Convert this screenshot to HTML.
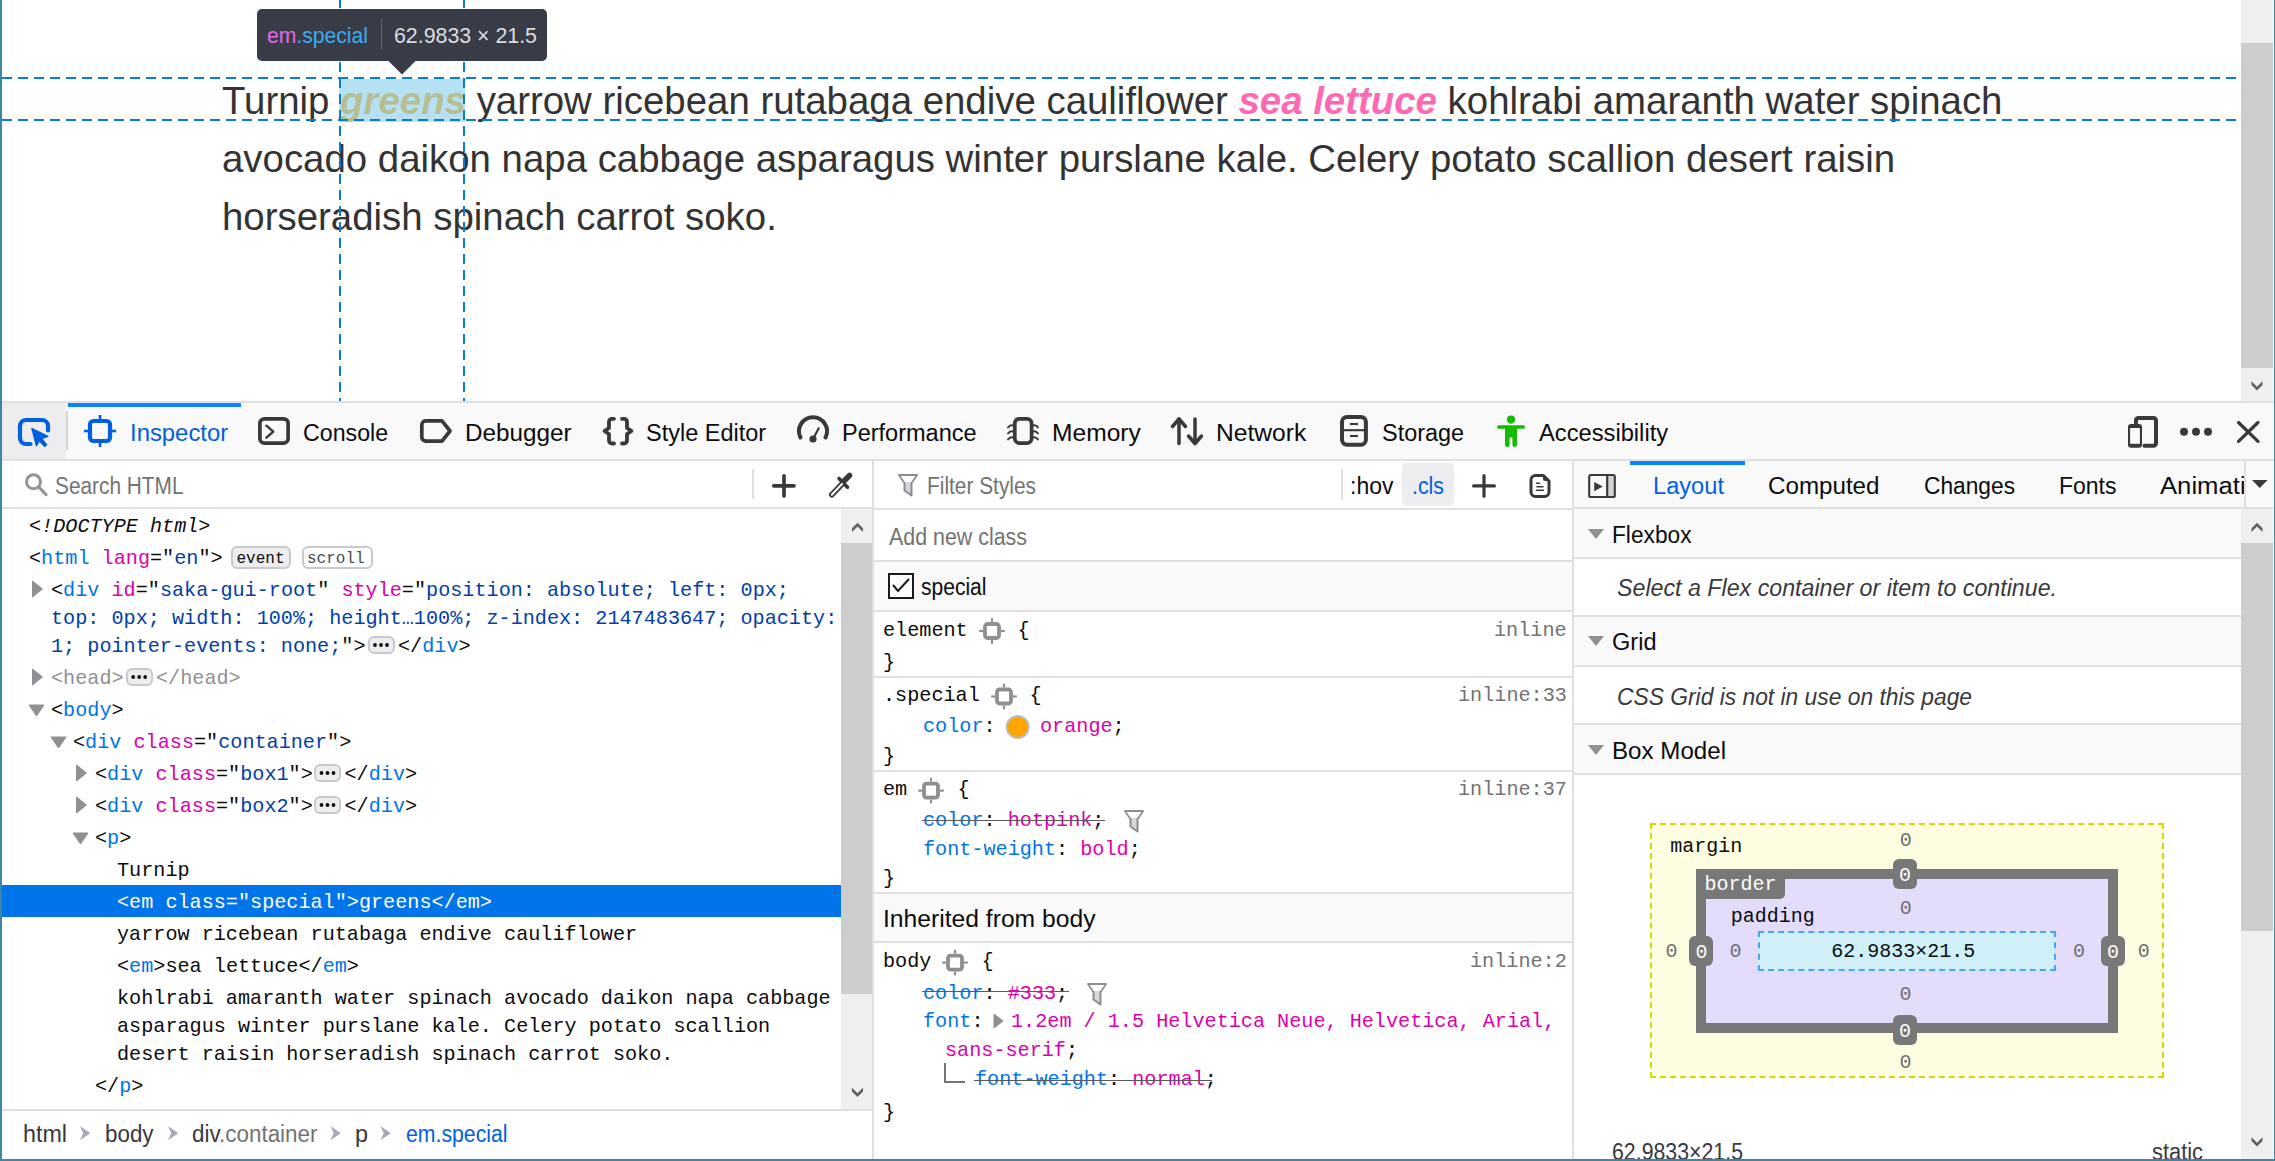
<!DOCTYPE html>
<html><head><meta charset="utf-8"><style>
html,body{margin:0;padding:0;width:2275px;height:1161px;overflow:hidden;background:#fff;}
body{position:relative;font-family:'Liberation Sans', sans-serif;}
</style></head><body>
<div style="position:absolute;left:0px;top:0px;width:2275px;height:401px;background:#ffffff;"></div><div style="position:absolute;left:222px;top:82.36px;font-family:'Liberation Sans', sans-serif;font-size:38.4px;line-height:38.4px;color:#333333;white-space:pre;"><span style="color:#333333;">Turnip </span><span style="color:#ffa500;font-weight:bold;font-style:italic">greens</span><span style="color:#333333;"> yarrow ricebean rutabaga endive cauliflower </span><span style="color:#ff69b4;font-weight:bold;font-style:italic">sea lettuce</span><span style="color:#333333;"> kohlrabi amaranth water spinach</span></div><div style="position:absolute;left:222px;top:139.96px;font-family:'Liberation Sans', sans-serif;font-size:38.4px;line-height:38.4px;color:#333333;white-space:pre;">avocado daikon napa cabbage asparagus winter purslane kale. Celery potato scallion desert raisin</div><div style="position:absolute;left:222px;top:197.56px;font-family:'Liberation Sans', sans-serif;font-size:38.4px;line-height:38.4px;color:#333333;white-space:pre;">horseradish spinach carrot soko.</div><div style="position:absolute;left:339px;top:79px;width:126px;height:43px;background:rgba(137,206,236,0.62);"></div><svg style="position:absolute;left:0;top:0" width="2275" height="401"><line x1="2" y1="78" x2="2241" y2="78" stroke="#0a7bd0" stroke-width="2" stroke-dasharray="10 6"/><line x1="2" y1="120" x2="2241" y2="120" stroke="#0a7bd0" stroke-width="2" stroke-dasharray="10 6"/><line x1="340" y1="-2" x2="340" y2="401" stroke="#0a7bd0" stroke-width="2" stroke-dasharray="10 6"/><line x1="464" y1="-2" x2="464" y2="401" stroke="#0a7bd0" stroke-width="2" stroke-dasharray="10 6"/></svg><svg style="position:absolute;left:0;top:0" width="600" height="90"><rect x="257" y="9" width="290" height="52" rx="5" fill="#383c46"/><polygon points="387.5,60 416.5,60 402,74.5" fill="#383c46"/></svg><div style="position:absolute;left:267px;top:25.30px;font-family:'Liberation Sans', sans-serif;font-size:22px;line-height:22px;color:#0c0c0d;white-space:pre;transform:scaleX(0.9605);transform-origin:0 0;"><span style="color:#e667e8;">em</span><span style="color:#3eaaf0;">.special</span></div><div style="position:absolute;left:380.5px;top:19px;width:1.5px;height:30px;background:#5d626b;"></div><div style="position:absolute;left:394px;top:25.30px;font-family:'Liberation Sans', sans-serif;font-size:22px;line-height:22px;color:#dcdce0;white-space:pre;transform:scaleX(0.9700);transform-origin:0 0;">62.9833 × 21.5</div><div style="position:absolute;left:2241px;top:0px;width:32px;height:401px;background:#efefef;"></div><div style="position:absolute;left:2241px;top:43px;width:32px;height:325px;background:#cdcdcd;"></div><div style="position:absolute;left:0px;top:401px;width:2275px;height:60px;background:#f9f9fa;"></div><div style="position:absolute;left:0px;top:401px;width:2275px;height:2px;background:#e0e0e2;"></div><div style="position:absolute;left:0px;top:459px;width:2275px;height:2px;background:#e0e0e2;"></div><div style="position:absolute;left:2px;top:403px;width:64px;height:56px;background:#ededf0;"></div><div style="position:absolute;left:66px;top:411px;width:2px;height:39px;background:#d7d7db;"></div><div style="position:absolute;left:68px;top:403px;width:173px;height:4px;background:#0a84ff;"></div><div style="position:absolute;left:129.8px;top:422.02px;font-family:'Liberation Sans', sans-serif;font-size:23.5px;line-height:23.5px;color:#0060df;white-space:pre;transform:scaleX(1.0158);transform-origin:0 0;">Inspector</div><div style="position:absolute;left:303.4px;top:422.02px;font-family:'Liberation Sans', sans-serif;font-size:23.5px;line-height:23.5px;color:#0c0c0d;white-space:pre;transform:scaleX(0.9868);transform-origin:0 0;">Console</div><div style="position:absolute;left:464.9px;top:422.02px;font-family:'Liberation Sans', sans-serif;font-size:23.5px;line-height:23.5px;color:#0c0c0d;white-space:pre;transform:scaleX(1.0328);transform-origin:0 0;">Debugger</div><div style="position:absolute;left:646.4px;top:422.02px;font-family:'Liberation Sans', sans-serif;font-size:23.5px;line-height:23.5px;color:#0c0c0d;white-space:pre;transform:scaleX(0.9994);transform-origin:0 0;">Style Editor</div><div style="position:absolute;left:841.5px;top:422.02px;font-family:'Liberation Sans', sans-serif;font-size:23.5px;line-height:23.5px;color:#0c0c0d;white-space:pre;transform:scaleX(1.0005);transform-origin:0 0;">Performance</div><div style="position:absolute;left:1051.7px;top:422.02px;font-family:'Liberation Sans', sans-serif;font-size:23.5px;line-height:23.5px;color:#0c0c0d;white-space:pre;transform:scaleX(1.0462);transform-origin:0 0;">Memory</div><div style="position:absolute;left:1216px;top:422.02px;font-family:'Liberation Sans', sans-serif;font-size:23.5px;line-height:23.5px;color:#0c0c0d;white-space:pre;transform:scaleX(1.0477);transform-origin:0 0;">Network</div><div style="position:absolute;left:1382px;top:422.02px;font-family:'Liberation Sans', sans-serif;font-size:23.5px;line-height:23.5px;color:#0c0c0d;white-space:pre;transform:scaleX(0.9974);transform-origin:0 0;">Storage</div><div style="position:absolute;left:1539px;top:422.02px;font-family:'Liberation Sans', sans-serif;font-size:23.5px;line-height:23.5px;color:#0c0c0d;white-space:pre;transform:scaleX(1.0087);transform-origin:0 0;">Accessibility</div><div style="position:absolute;left:2px;top:461px;width:2271px;height:698px;background:#ffffff;"></div><div style="position:absolute;left:2px;top:507px;width:870px;height:2px;background:#e0e0e2;"></div><div style="position:absolute;left:54.7px;top:474.75px;font-family:'Liberation Sans', sans-serif;font-size:23px;line-height:23px;color:#737373;white-space:pre;transform:scaleX(0.9057);transform-origin:0 0;">Search HTML</div><div style="position:absolute;left:752px;top:469px;width:2px;height:30px;background:#e0e0e2;"></div><div style="position:absolute;left:872px;top:461px;width:2px;height:698px;background:#e0e0e2;"></div><div style="position:absolute;left:1572px;top:461px;width:2px;height:698px;background:#e0e0e2;"></div><div style="position:absolute;left:2px;top:1109px;width:870px;height:2px;background:#e0e0e2;"></div><div style="position:absolute;left:22.6px;top:1123.45px;font-family:'Liberation Sans', sans-serif;font-size:23px;line-height:23px;color:#38383d;white-space:pre;transform:scaleX(1.0126);transform-origin:0 0;">html</div><div style="position:absolute;left:105.4px;top:1123.45px;font-family:'Liberation Sans', sans-serif;font-size:23px;line-height:23px;color:#38383d;white-space:pre;transform:scaleX(0.9724);transform-origin:0 0;">body</div><div style="position:absolute;left:192px;top:1123.45px;font-family:'Liberation Sans', sans-serif;font-size:23px;line-height:23px;color:#0c0c0d;white-space:pre;transform:scaleX(0.9750);transform-origin:0 0;"><span style="color:#38383d;">div</span><span style="color:#737373;">.container</span></div><div style="position:absolute;left:354.5px;top:1123.45px;font-family:'Liberation Sans', sans-serif;font-size:23px;line-height:23px;color:#38383d;white-space:pre;transform:scaleX(1.0159);transform-origin:0 0;">p</div><div style="position:absolute;left:405.7px;top:1123.45px;font-family:'Liberation Sans', sans-serif;font-size:23px;line-height:23px;color:#0060df;white-space:pre;transform:scaleX(0.9233);transform-origin:0 0;">em.special</div><div style="position:absolute;left:841px;top:509px;width:31px;height:600px;background:#efefef;"></div><div style="position:absolute;left:841px;top:543px;width:31px;height:451px;background:#cdcdcd;"></div><div style="position:absolute;left:2px;top:885px;width:839px;height:32px;background:#0074e8;"></div><div style="position:absolute;left:29px;top:516.68px;font-family:'Liberation Mono', monospace;font-size:20.16px;line-height:20.16px;color:#0c0c0d;white-space:pre;"><span style="color:#0c0c0d;font-style:italic">&lt;!DOCTYPE html&gt;</span></div><div style="position:absolute;left:29px;top:548.68px;font-family:'Liberation Mono', monospace;font-size:20.16px;line-height:20.16px;color:#0c0c0d;white-space:pre;"><span style="color:#0c0c0d;">&lt;</span><span style="color:#0074e8;">html</span><span style="color:#0c0c0d;"> </span><span style="color:#dd00a9;">lang</span><span style="color:#0c0c0d;">=&quot;</span><span style="color:#003eaa;">en</span><span style="color:#0c0c0d;">&quot;&gt;</span></div><div style="position:absolute;left:51px;top:580.68px;font-family:'Liberation Mono', monospace;font-size:20.16px;line-height:20.16px;color:#0c0c0d;white-space:pre;"><span style="color:#0c0c0d;">&lt;</span><span style="color:#0074e8;">div</span><span style="color:#0c0c0d;"> </span><span style="color:#dd00a9;">id</span><span style="color:#0c0c0d;">=&quot;</span><span style="color:#003eaa;">saka-gui-root</span><span style="color:#0c0c0d;">&quot; </span><span style="color:#dd00a9;">style</span><span style="color:#0c0c0d;">=&quot;</span><span style="color:#003eaa;">position: absolute; left: 0px;</span></div><div style="position:absolute;left:51px;top:608.68px;font-family:'Liberation Mono', monospace;font-size:20.16px;line-height:20.16px;color:#0c0c0d;white-space:pre;"><span style="color:#003eaa;">top: 0px; width: 100%; height…100%; z-index: 2147483647; opacity:</span></div><div style="position:absolute;left:51px;top:636.68px;font-family:'Liberation Mono', monospace;font-size:20.16px;line-height:20.16px;color:#0c0c0d;white-space:pre;"><span style="color:#003eaa;">1; pointer-events: none;</span><span style="color:#0c0c0d;">&quot;&gt;</span></div><div style="position:absolute;left:398px;top:636.68px;font-family:'Liberation Mono', monospace;font-size:20.16px;line-height:20.16px;color:#0c0c0d;white-space:pre;"><span style="color:#0c0c0d;">&lt;/</span><span style="color:#0074e8;">div</span><span style="color:#0c0c0d;">&gt;</span></div><div style="position:absolute;left:51px;top:668.68px;font-family:'Liberation Mono', monospace;font-size:20.16px;line-height:20.16px;color:#0c0c0d;white-space:pre;"><span style="color:#8f8f94;">&lt;head&gt;</span></div><div style="position:absolute;left:156px;top:668.68px;font-family:'Liberation Mono', monospace;font-size:20.16px;line-height:20.16px;color:#0c0c0d;white-space:pre;"><span style="color:#8f8f94;">&lt;/head&gt;</span></div><div style="position:absolute;left:51px;top:700.68px;font-family:'Liberation Mono', monospace;font-size:20.16px;line-height:20.16px;color:#0c0c0d;white-space:pre;"><span style="color:#0c0c0d;">&lt;</span><span style="color:#0074e8;">body</span><span style="color:#0c0c0d;">&gt;</span></div><div style="position:absolute;left:73px;top:732.68px;font-family:'Liberation Mono', monospace;font-size:20.16px;line-height:20.16px;color:#0c0c0d;white-space:pre;"><span style="color:#0c0c0d;">&lt;</span><span style="color:#0074e8;">div</span><span style="color:#0c0c0d;"> </span><span style="color:#dd00a9;">class</span><span style="color:#0c0c0d;">=&quot;</span><span style="color:#003eaa;">container</span><span style="color:#0c0c0d;">&quot;&gt;</span></div><div style="position:absolute;left:95px;top:764.68px;font-family:'Liberation Mono', monospace;font-size:20.16px;line-height:20.16px;color:#0c0c0d;white-space:pre;"><span style="color:#0c0c0d;">&lt;</span><span style="color:#0074e8;">div</span><span style="color:#0c0c0d;"> </span><span style="color:#dd00a9;">class</span><span style="color:#0c0c0d;">=&quot;</span><span style="color:#003eaa;">box1</span><span style="color:#0c0c0d;">&quot;&gt;</span></div><div style="position:absolute;left:344.5px;top:764.68px;font-family:'Liberation Mono', monospace;font-size:20.16px;line-height:20.16px;color:#0c0c0d;white-space:pre;"><span style="color:#0c0c0d;">&lt;/</span><span style="color:#0074e8;">div</span><span style="color:#0c0c0d;">&gt;</span></div><div style="position:absolute;left:95px;top:796.68px;font-family:'Liberation Mono', monospace;font-size:20.16px;line-height:20.16px;color:#0c0c0d;white-space:pre;"><span style="color:#0c0c0d;">&lt;</span><span style="color:#0074e8;">div</span><span style="color:#0c0c0d;"> </span><span style="color:#dd00a9;">class</span><span style="color:#0c0c0d;">=&quot;</span><span style="color:#003eaa;">box2</span><span style="color:#0c0c0d;">&quot;&gt;</span></div><div style="position:absolute;left:344.5px;top:796.68px;font-family:'Liberation Mono', monospace;font-size:20.16px;line-height:20.16px;color:#0c0c0d;white-space:pre;"><span style="color:#0c0c0d;">&lt;/</span><span style="color:#0074e8;">div</span><span style="color:#0c0c0d;">&gt;</span></div><div style="position:absolute;left:95px;top:828.68px;font-family:'Liberation Mono', monospace;font-size:20.16px;line-height:20.16px;color:#0c0c0d;white-space:pre;"><span style="color:#0c0c0d;">&lt;</span><span style="color:#0074e8;">p</span><span style="color:#0c0c0d;">&gt;</span></div><div style="position:absolute;left:117px;top:860.68px;font-family:'Liberation Mono', monospace;font-size:20.16px;line-height:20.16px;color:#0c0c0d;white-space:pre;"><span style="color:#0c0c0d;">Turnip</span></div><div style="position:absolute;left:117px;top:892.68px;font-family:'Liberation Mono', monospace;font-size:20.16px;line-height:20.16px;color:#0c0c0d;white-space:pre;"><span style="color:#ffffff;">&lt;em class=&quot;special&quot;&gt;greens&lt;/em&gt;</span></div><div style="position:absolute;left:117px;top:924.68px;font-family:'Liberation Mono', monospace;font-size:20.16px;line-height:20.16px;color:#0c0c0d;white-space:pre;"><span style="color:#0c0c0d;">yarrow ricebean rutabaga endive cauliflower</span></div><div style="position:absolute;left:117px;top:956.68px;font-family:'Liberation Mono', monospace;font-size:20.16px;line-height:20.16px;color:#0c0c0d;white-space:pre;"><span style="color:#0c0c0d;">&lt;</span><span style="color:#0074e8;">em</span><span style="color:#0c0c0d;">&gt;sea lettuce&lt;/</span><span style="color:#0074e8;">em</span><span style="color:#0c0c0d;">&gt;</span></div><div style="position:absolute;left:117px;top:988.68px;font-family:'Liberation Mono', monospace;font-size:20.16px;line-height:20.16px;color:#0c0c0d;white-space:pre;"><span style="color:#0c0c0d;">kohlrabi amaranth water spinach avocado daikon napa cabbage</span></div><div style="position:absolute;left:117px;top:1016.68px;font-family:'Liberation Mono', monospace;font-size:20.16px;line-height:20.16px;color:#0c0c0d;white-space:pre;"><span style="color:#0c0c0d;">asparagus winter purslane kale. Celery potato scallion</span></div><div style="position:absolute;left:117px;top:1044.68px;font-family:'Liberation Mono', monospace;font-size:20.16px;line-height:20.16px;color:#0c0c0d;white-space:pre;"><span style="color:#0c0c0d;">desert raisin horseradish spinach carrot soko.</span></div><div style="position:absolute;left:95px;top:1076.68px;font-family:'Liberation Mono', monospace;font-size:20.16px;line-height:20.16px;color:#0c0c0d;white-space:pre;"><span style="color:#0c0c0d;">&lt;/</span><span style="color:#0074e8;">p</span><span style="color:#0c0c0d;">&gt;</span></div><div style="position:absolute;left:230.5px;top:545.5px;width:56.0px;height:19.0px;background:#ededf0;border:2px solid #c8c8ce;border-radius:6px"></div><div style="position:absolute;left:236.5px;top:550.84px;font-family:'Liberation Mono', monospace;font-size:16px;line-height:16px;color:#0c0c0d;white-space:pre;">event</div><div style="position:absolute;left:301.5px;top:545.5px;width:67.0px;height:19.0px;background:#ffffff;border:2px solid #c8c8ce;border-radius:6px"></div><div style="position:absolute;left:307px;top:550.84px;font-family:'Liberation Mono', monospace;font-size:16px;line-height:16px;color:#4a4a4f;white-space:pre;">scroll</div><div style="position:absolute;left:367.5px;top:636px;width:23.0px;height:14px;background:#ededf0;border:2px solid #c8c8ce;border-radius:6px"></div><div style="position:absolute;left:125.7px;top:668px;width:22.999999999999986px;height:14px;background:#ededf0;border:2px solid #c8c8ce;border-radius:6px"></div><div style="position:absolute;left:314px;top:764px;width:23px;height:14px;background:#ededf0;border:2px solid #c8c8ce;border-radius:6px"></div><div style="position:absolute;left:314px;top:796px;width:23px;height:14px;background:#ededf0;border:2px solid #c8c8ce;border-radius:6px"></div><div style="position:absolute;left:874px;top:508px;width:698px;height:2px;background:#e0e0e2;"></div><div style="position:absolute;left:927px;top:474.75px;font-family:'Liberation Sans', sans-serif;font-size:23px;line-height:23px;color:#737373;white-space:pre;transform:scaleX(0.9073);transform-origin:0 0;">Filter Styles</div><div style="position:absolute;left:1341px;top:469px;width:2px;height:31px;background:#e0e0e2;"></div><div style="position:absolute;left:1350px;top:474.75px;font-family:'Liberation Sans', sans-serif;font-size:23px;line-height:23px;color:#0c0c0d;white-space:pre;transform:scaleX(1.0004);transform-origin:0 0;">:hov</div><div style="position:absolute;left:1402px;top:463px;width:52px;height:43px;background:#ededf0;border-radius:4px"></div><div style="position:absolute;left:1412px;top:474.75px;font-family:'Liberation Sans', sans-serif;font-size:23px;line-height:23px;color:#0060df;white-space:pre;transform:scaleX(0.9275);transform-origin:0 0;">.cls</div><div style="position:absolute;left:888.5px;top:525.85px;font-family:'Liberation Sans', sans-serif;font-size:23px;line-height:23px;color:#737373;white-space:pre;transform:scaleX(0.9305);transform-origin:0 0;">Add new class</div><div style="position:absolute;left:874px;top:560px;width:698px;height:2px;background:#e0e0e2;"></div><div style="position:absolute;left:874px;top:562px;width:698px;height:48px;background:#f9f9fa;"></div><div style="position:absolute;left:874px;top:610px;width:698px;height:2px;background:#e0e0e2;"></div><div style="position:absolute;left:888px;top:573px;width:22px;height:22px;border:2px solid #1b1b1b;background:#fff"></div><div style="position:absolute;left:920.8px;top:575.95px;font-family:'Liberation Sans', sans-serif;font-size:23px;line-height:23px;color:#0c0c0d;white-space:pre;transform:scaleX(0.9147);transform-origin:0 0;">special</div><div style="position:absolute;left:874px;top:676px;width:698px;height:2px;background:#e0e0e2;"></div><div style="position:absolute;left:874px;top:770px;width:698px;height:2px;background:#e0e0e2;"></div><div style="position:absolute;left:874px;top:892px;width:698px;height:2px;background:#e0e0e2;"></div><div style="position:absolute;left:874px;top:894px;width:698px;height:47px;background:#f9f9fa;"></div><div style="position:absolute;left:874px;top:941px;width:698px;height:2px;background:#e0e0e2;"></div><div style="position:absolute;left:883px;top:620.68px;font-family:'Liberation Mono', monospace;font-size:20.16px;line-height:20.16px;color:#0c0c0d;white-space:pre;"><span style="color:#0c0c0d;">element</span></div><div style="position:absolute;left:1017.5px;top:620.68px;font-family:'Liberation Mono', monospace;font-size:20.16px;line-height:20.16px;color:#0c0c0d;white-space:pre;"><span style="color:#0c0c0d;">{</span></div><div style="position:absolute;left:1494px;top:620.68px;font-family:'Liberation Mono', monospace;font-size:20.16px;line-height:20.16px;color:#0c0c0d;white-space:pre;"><span style="color:#737373;">inline</span></div><div style="position:absolute;left:883px;top:652.68px;font-family:'Liberation Mono', monospace;font-size:20.16px;line-height:20.16px;color:#0c0c0d;white-space:pre;"><span style="color:#0c0c0d;">}</span></div><div style="position:absolute;left:883px;top:686.18px;font-family:'Liberation Mono', monospace;font-size:20.16px;line-height:20.16px;color:#0c0c0d;white-space:pre;"><span style="color:#0c0c0d;">.special</span></div><div style="position:absolute;left:1029.5px;top:686.18px;font-family:'Liberation Mono', monospace;font-size:20.16px;line-height:20.16px;color:#0c0c0d;white-space:pre;"><span style="color:#0c0c0d;">{</span></div><div style="position:absolute;left:1458px;top:686.18px;font-family:'Liberation Mono', monospace;font-size:20.16px;line-height:20.16px;color:#0c0c0d;white-space:pre;"><span style="color:#737373;">inline:33</span></div><div style="position:absolute;left:923px;top:717.18px;font-family:'Liberation Mono', monospace;font-size:20.16px;line-height:20.16px;color:#0c0c0d;white-space:pre;"><span style="color:#0074e8;">color</span><span style="color:#0c0c0d;">: </span></div><div style="position:absolute;left:1040px;top:717.18px;font-family:'Liberation Mono', monospace;font-size:20.16px;line-height:20.16px;color:#0c0c0d;white-space:pre;"><span style="color:#dd00a9;">orange</span><span style="color:#0c0c0d;">;</span></div><div style="position:absolute;left:883px;top:746.68px;font-family:'Liberation Mono', monospace;font-size:20.16px;line-height:20.16px;color:#0c0c0d;white-space:pre;"><span style="color:#0c0c0d;">}</span></div><div style="position:absolute;left:883px;top:780.28px;font-family:'Liberation Mono', monospace;font-size:20.16px;line-height:20.16px;color:#0c0c0d;white-space:pre;"><span style="color:#0c0c0d;">em</span></div><div style="position:absolute;left:957.5px;top:780.28px;font-family:'Liberation Mono', monospace;font-size:20.16px;line-height:20.16px;color:#0c0c0d;white-space:pre;"><span style="color:#0c0c0d;">{</span></div><div style="position:absolute;left:1458px;top:780.28px;font-family:'Liberation Mono', monospace;font-size:20.16px;line-height:20.16px;color:#0c0c0d;white-space:pre;"><span style="color:#737373;">inline:37</span></div><div style="position:absolute;left:923px;top:811.28px;font-family:'Liberation Mono', monospace;font-size:20.16px;line-height:20.16px;color:#0c0c0d;white-space:pre;"><span style="color:#0074e8;">color</span><span style="color:#0c0c0d;">: </span><span style="color:#dd00a9;">hotpink</span><span style="color:#0c0c0d;">;</span></div><div style="position:absolute;left:922px;top:820px;width:183px;height:1.2000000000000455px;background:#5a5a5a;"></div><div style="position:absolute;left:923px;top:839.98px;font-family:'Liberation Mono', monospace;font-size:20.16px;line-height:20.16px;color:#0c0c0d;white-space:pre;"><span style="color:#0074e8;">font-weight</span><span style="color:#0c0c0d;">: </span><span style="color:#dd00a9;">bold</span><span style="color:#0c0c0d;">;</span></div><div style="position:absolute;left:883px;top:869.38px;font-family:'Liberation Mono', monospace;font-size:20.16px;line-height:20.16px;color:#0c0c0d;white-space:pre;"><span style="color:#0c0c0d;">}</span></div><div style="position:absolute;left:883px;top:908.02px;font-family:'Liberation Sans', sans-serif;font-size:23.5px;line-height:23.5px;color:#0c0c0d;white-space:pre;transform:scaleX(1.0495);transform-origin:0 0;">Inherited from body</div><div style="position:absolute;left:883px;top:952.28px;font-family:'Liberation Mono', monospace;font-size:20.16px;line-height:20.16px;color:#0c0c0d;white-space:pre;"><span style="color:#0c0c0d;">body</span></div><div style="position:absolute;left:981.5px;top:952.28px;font-family:'Liberation Mono', monospace;font-size:20.16px;line-height:20.16px;color:#0c0c0d;white-space:pre;"><span style="color:#0c0c0d;">{</span></div><div style="position:absolute;left:1470px;top:952.28px;font-family:'Liberation Mono', monospace;font-size:20.16px;line-height:20.16px;color:#0c0c0d;white-space:pre;"><span style="color:#737373;">inline:2</span></div><div style="position:absolute;left:923px;top:983.68px;font-family:'Liberation Mono', monospace;font-size:20.16px;line-height:20.16px;color:#0c0c0d;white-space:pre;"><span style="color:#0074e8;">color</span><span style="color:#0c0c0d;">: </span><span style="color:#dd00a9;">#333</span><span style="color:#0c0c0d;">;</span></div><div style="position:absolute;left:922px;top:991.3px;width:147px;height:1.2000000000000455px;background:#5a5a5a;"></div><div style="position:absolute;left:923px;top:1012.28px;font-family:'Liberation Mono', monospace;font-size:20.16px;line-height:20.16px;color:#0c0c0d;white-space:pre;"><span style="color:#0074e8;">font</span><span style="color:#0c0c0d;">:</span></div><div style="position:absolute;left:1011px;top:1012.28px;font-family:'Liberation Mono', monospace;font-size:20.16px;line-height:20.16px;color:#0c0c0d;white-space:pre;"><span style="color:#dd00a9;">1.2em / 1.5 Helvetica Neue, Helvetica, Arial,</span></div><div style="position:absolute;left:945px;top:1040.68px;font-family:'Liberation Mono', monospace;font-size:20.16px;line-height:20.16px;color:#0c0c0d;white-space:pre;"><span style="color:#dd00a9;">sans-serif</span><span style="color:#0c0c0d;">;</span></div><div style="position:absolute;left:975px;top:1070.28px;font-family:'Liberation Mono', monospace;font-size:20.16px;line-height:20.16px;color:#0c0c0d;white-space:pre;"><span style="color:#0074e8;">font-weight</span><span style="color:#0c0c0d;">: </span><span style="color:#dd00a9;">normal</span><span style="color:#0c0c0d;">;</span></div><div style="position:absolute;left:974px;top:1080px;width:238px;height:1.2000000000000455px;background:#5a5a5a;"></div><div style="position:absolute;left:883px;top:1102.68px;font-family:'Liberation Mono', monospace;font-size:20.16px;line-height:20.16px;color:#0c0c0d;white-space:pre;"><span style="color:#0c0c0d;">}</span></div><div style="position:absolute;left:1574px;top:461px;width:699px;height:46px;background:#f9f9fa;"></div><div style="position:absolute;left:1574px;top:507px;width:699px;height:2px;background:#e0e0e2;"></div><div style="position:absolute;left:1630px;top:461px;width:115px;height:4px;background:#0a84ff;"></div><div style="position:absolute;left:1653px;top:475.02px;font-family:'Liberation Sans', sans-serif;font-size:23.5px;line-height:23.5px;color:#0060df;white-space:pre;transform:scaleX(1.0062);transform-origin:0 0;">Layout</div><div style="position:absolute;left:1768px;top:475.02px;font-family:'Liberation Sans', sans-serif;font-size:23.5px;line-height:23.5px;color:#0c0c0d;white-space:pre;transform:scaleX(1.0282);transform-origin:0 0;">Computed</div><div style="position:absolute;left:1924px;top:475.02px;font-family:'Liberation Sans', sans-serif;font-size:23.5px;line-height:23.5px;color:#0c0c0d;white-space:pre;transform:scaleX(0.9673);transform-origin:0 0;">Changes</div><div style="position:absolute;left:2059px;top:475.02px;font-family:'Liberation Sans', sans-serif;font-size:23.5px;line-height:23.5px;color:#0c0c0d;white-space:pre;transform:scaleX(0.9782);transform-origin:0 0;">Fonts</div><div style="position:absolute;left:2160px;top:461px;width:84px;height:46px;overflow:hidden"><div style="position:absolute;left:0px;top:14.03px;font-family:'Liberation Sans', sans-serif;font-size:23.5px;line-height:23.5px;color:#0c0c0d;white-space:pre;transform:scaleX(1.0925);transform-origin:0 0;">Animations</div></div><div style="position:absolute;left:2244px;top:461px;width:2px;height:46px;background:#e0e0e2;"></div><div style="position:absolute;left:2241px;top:509px;width:32px;height:650px;background:#efefef;"></div><div style="position:absolute;left:2241px;top:543px;width:32px;height:388px;background:#cdcdcd;"></div><div style="position:absolute;left:1574px;top:509px;width:667px;height:48px;background:#f9f9fa;"></div><div style="position:absolute;left:1574px;top:557px;width:667px;height:2px;background:#e0e0e2;"></div><div style="position:absolute;left:1611.5px;top:524.02px;font-family:'Liberation Sans', sans-serif;font-size:23.5px;line-height:23.5px;color:#0c0c0d;white-space:pre;transform:scaleX(0.9660);transform-origin:0 0;">Flexbox</div><div style="position:absolute;left:1574px;top:617px;width:667px;height:48px;background:#f9f9fa;"></div><div style="position:absolute;left:1574px;top:665px;width:667px;height:2px;background:#e0e0e2;"></div><div style="position:absolute;left:1611.5px;top:631.02px;font-family:'Liberation Sans', sans-serif;font-size:23.5px;line-height:23.5px;color:#0c0c0d;white-space:pre;transform:scaleX(1.0021);transform-origin:0 0;">Grid</div><div style="position:absolute;left:1574px;top:725px;width:667px;height:48px;background:#f9f9fa;"></div><div style="position:absolute;left:1574px;top:773px;width:667px;height:2px;background:#e0e0e2;"></div><div style="position:absolute;left:1611.5px;top:740.02px;font-family:'Liberation Sans', sans-serif;font-size:23.5px;line-height:23.5px;color:#0c0c0d;white-space:pre;transform:scaleX(1.0267);transform-origin:0 0;">Box Model</div><div style="position:absolute;left:1574px;top:615px;width:667px;height:2px;background:#e0e0e2;"></div><div style="position:absolute;left:1574px;top:723px;width:667px;height:2px;background:#e0e0e2;"></div><div style="position:absolute;left:1616.5px;top:577.45px;font-family:'Liberation Sans', sans-serif;font-size:23px;line-height:23px;color:#38383d;white-space:pre;transform:scaleX(1.0093);transform-origin:0 0;font-style:italic">Select a Flex container or item to continue.</div><div style="position:absolute;left:1616.5px;top:685.95px;font-family:'Liberation Sans', sans-serif;font-size:23px;line-height:23px;color:#38383d;white-space:pre;transform:scaleX(0.9917);transform-origin:0 0;font-style:italic">CSS Grid is not in use on this page</div><div style="position:absolute;left:1650px;top:823px;width:510px;height:251px;background:#fdfde2;border:2px dashed #d6d600"></div><div style="position:absolute;left:1696px;top:869px;width:422px;height:164px;background:#787878;"></div><div style="position:absolute;left:1706px;top:879px;width:402px;height:144px;background:#e3dcfb;"></div><div style="position:absolute;left:1696px;top:869px;width:89px;height:30px;background:#787878;border-bottom-right-radius:5px"></div><div style="position:absolute;left:1758px;top:931px;width:294px;height:36px;background:#cfeff9;border:2px dashed #4aa3f5"></div><div style="position:absolute;left:1670.3px;top:837.30px;font-family:'Liberation Mono', monospace;font-size:20px;line-height:20px;color:#0c0c0d;white-space:pre;">margin</div><div style="position:absolute;left:1704.5px;top:874.80px;font-family:'Liberation Mono', monospace;font-size:20px;line-height:20px;color:#ffffff;white-space:pre;">border</div><div style="position:absolute;left:1730.8px;top:906.60px;font-family:'Liberation Mono', monospace;font-size:20px;line-height:20px;color:#0c0c0d;white-space:pre;">padding</div><div style="position:absolute;left:1831.2px;top:941.60px;font-family:'Liberation Mono', monospace;font-size:20px;line-height:20px;color:#0c0c0d;white-space:pre;">62.9833×21.5</div><div style="position:absolute;left:1899.8px;top:830.80px;font-family:'Liberation Mono', monospace;font-size:20px;line-height:20px;color:#6e6e6e;white-space:pre;">0</div><div style="position:absolute;left:1899.8px;top:898.60px;font-family:'Liberation Mono', monospace;font-size:20px;line-height:20px;color:#6e6e6e;white-space:pre;">0</div><div style="position:absolute;left:1899.6px;top:984.60px;font-family:'Liberation Mono', monospace;font-size:20px;line-height:20px;color:#6e6e6e;white-space:pre;">0</div><div style="position:absolute;left:1899.6px;top:1052.60px;font-family:'Liberation Mono', monospace;font-size:20px;line-height:20px;color:#6e6e6e;white-space:pre;">0</div><div style="position:absolute;left:1665.5px;top:941.60px;font-family:'Liberation Mono', monospace;font-size:20px;line-height:20px;color:#6e6e6e;white-space:pre;">0</div><div style="position:absolute;left:1729.6px;top:941.60px;font-family:'Liberation Mono', monospace;font-size:20px;line-height:20px;color:#6e6e6e;white-space:pre;">0</div><div style="position:absolute;left:2073px;top:941.60px;font-family:'Liberation Mono', monospace;font-size:20px;line-height:20px;color:#6e6e6e;white-space:pre;">0</div><div style="position:absolute;left:2137.8px;top:941.60px;font-family:'Liberation Mono', monospace;font-size:20px;line-height:20px;color:#6e6e6e;white-space:pre;">0</div><div style="position:absolute;left:1893px;top:859.3px;width:24px;height:30px;background:#787878;border-radius:6px"></div><div style="position:absolute;left:1899px;top:866.10px;font-family:'Liberation Mono', monospace;font-size:20px;line-height:20px;color:#ffffff;white-space:pre;">0</div><div style="position:absolute;left:1893px;top:1015.4px;width:24px;height:30px;background:#787878;border-radius:6px"></div><div style="position:absolute;left:1899px;top:1022.20px;font-family:'Liberation Mono', monospace;font-size:20px;line-height:20px;color:#ffffff;white-space:pre;">0</div><div style="position:absolute;left:1689.4px;top:936px;width:24px;height:30px;background:#787878;border-radius:6px"></div><div style="position:absolute;left:1695.4px;top:942.80px;font-family:'Liberation Mono', monospace;font-size:20px;line-height:20px;color:#ffffff;white-space:pre;">0</div><div style="position:absolute;left:2101px;top:936px;width:24px;height:30px;background:#787878;border-radius:6px"></div><div style="position:absolute;left:2107px;top:942.80px;font-family:'Liberation Mono', monospace;font-size:20px;line-height:20px;color:#ffffff;white-space:pre;">0</div><div style="position:absolute;left:1612px;top:1140.95px;font-family:'Liberation Sans', sans-serif;font-size:23px;line-height:23px;color:#38383d;white-space:pre;transform:scaleX(0.9268);transform-origin:0 0;">62.9833×21.5</div><div style="position:absolute;left:2151.5px;top:1140.95px;font-family:'Liberation Sans', sans-serif;font-size:23px;line-height:23px;color:#38383d;white-space:pre;transform:scaleX(0.9499);transform-origin:0 0;">static</div><div style="position:absolute;left:0px;top:0px;width:2px;height:1161px;background:#3e86a4;"></div><div style="position:absolute;left:2273.5px;top:0px;width:1.5px;height:1161px;background:#3e86a4;"></div><div style="position:absolute;left:0px;top:1159px;width:2275px;height:2px;background:#3e86a4;"></div>
<svg style="position:absolute;left:0;top:0" width="2275" height="1161"><polygon points="80,1126 90.2,1133.2 80,1140.3 83.2,1133.2" fill="#a3a8bb"/><polygon points="168,1126 178.2,1133.2 168,1140.3 171.2,1133.2" fill="#a3a8bb"/><polygon points="330.5,1126 340.7,1133.2 330.5,1140.3 333.7,1133.2" fill="#a3a8bb"/><polygon points="380.5,1126 390.7,1133.2 380.5,1140.3 383.7,1133.2" fill="#a3a8bb"/><circle cx="375.0" cy="645.0" r="1.9" fill="#0c0c0d"/><circle cx="381.0" cy="645.0" r="1.9" fill="#0c0c0d"/><circle cx="387.0" cy="645.0" r="1.9" fill="#0c0c0d"/><circle cx="133.2" cy="677.0" r="1.9" fill="#0c0c0d"/><circle cx="139.2" cy="677.0" r="1.9" fill="#0c0c0d"/><circle cx="145.2" cy="677.0" r="1.9" fill="#0c0c0d"/><circle cx="321.5" cy="773.0" r="1.9" fill="#0c0c0d"/><circle cx="327.5" cy="773.0" r="1.9" fill="#0c0c0d"/><circle cx="333.5" cy="773.0" r="1.9" fill="#0c0c0d"/><circle cx="321.5" cy="805.0" r="1.9" fill="#0c0c0d"/><circle cx="327.5" cy="805.0" r="1.9" fill="#0c0c0d"/><circle cx="333.5" cy="805.0" r="1.9" fill="#0c0c0d"/><polygon points="32.5,581 42.5,589 32.5,597" fill="#8f8f94" stroke="#8f8f94" stroke-width="1" stroke-linejoin="round"/><polygon points="32.5,669 42.5,677 32.5,685" fill="#8f8f94" stroke="#8f8f94" stroke-width="1" stroke-linejoin="round"/><polygon points="29,705 44,705 36.5,716" fill="#8f8f94" stroke="#8f8f94" stroke-width="1" stroke-linejoin="round"/><polygon points="51,737 66,737 58.5,748" fill="#8f8f94" stroke="#8f8f94" stroke-width="1" stroke-linejoin="round"/><polygon points="76.5,765 86.5,773 76.5,781" fill="#8f8f94" stroke="#8f8f94" stroke-width="1" stroke-linejoin="round"/><polygon points="76.5,797 86.5,805 76.5,813" fill="#8f8f94" stroke="#8f8f94" stroke-width="1" stroke-linejoin="round"/><polygon points="73,833 88,833 80.5,844" fill="#8f8f94" stroke="#8f8f94" stroke-width="1" stroke-linejoin="round"/><polyline points="893,585 898,591 909,579" fill="none" stroke="#1b1b1b" stroke-width="2"/><polyline points="945,1063 945,1082 965,1082" fill="none" stroke="#737373" stroke-width="2"/><circle cx="1017.7" cy="727" r="11" fill="#ffa500" stroke="#bdbdbd" stroke-width="2"/><polygon points="994,1014 1003,1021 994,1028" fill="#8f8f94" stroke="#8f8f94" stroke-linejoin="round"/><polygon points="2252,480 2267.5,480 2259.75,488" fill="#38383d"/><polygon points="1588,529 1604,529 1596,539" fill="#8f8f94"/><polygon points="1588,636 1604,636 1596,646" fill="#8f8f94"/><polygon points="1588,745 1604,745 1596,755" fill="#8f8f94"/><path d="M30.5,444 H26 A6,6 0 0 1 20,438 V426 A6,6 0 0 1 26,420 H42 A6,6 0 0 1 48,426 V430.5" fill="none" stroke="#0060df" stroke-width="4.2" stroke-linecap="round" stroke-linejoin="round" /><path d="M32,428.6 L47.8,436.3 L41.5,438.6 L46.5,444.7 L44.5,446.3 L39.3,440.4 L36.5,445.7 Z" fill="#0060df" stroke="#0060df" stroke-width="1.5" stroke-linejoin="round"/><rect x="90" y="421" width="20" height="20" rx="3.5" fill="none" stroke="#0060df" stroke-width="4.2"/><line x1="100" y1="415" x2="100" y2="419" stroke="#0060df" stroke-width="2.6" stroke-linecap="butt"/><line x1="100" y1="443" x2="100" y2="447" stroke="#0060df" stroke-width="2.6" stroke-linecap="butt"/><line x1="84" y1="431" x2="88" y2="431" stroke="#0060df" stroke-width="2.6" stroke-linecap="butt"/><line x1="112" y1="431" x2="116" y2="431" stroke="#0060df" stroke-width="2.6" stroke-linecap="butt"/><rect x="259.9" y="418.8" width="28.2" height="24.3" rx="4.5" fill="none" stroke="#38383d" stroke-width="3.7"/><path d="M266.4,425.7 L273.3,431.7 L266.4,437.7" fill="none" stroke="#38383d" stroke-width="2.4" stroke-linecap="round" stroke-linejoin="round" stroke-linecap="butt"/><path d="M442,420.9 H425.5 A4,4 0 0 0 421.8,424.9 V437.1 A4,4 0 0 0 425.5,441.1 H442 L450,431 Z" fill="none" stroke="#38383d" stroke-width="3.7" stroke-linecap="round" stroke-linejoin="round" /><path d="M614,418.8 H612 A3,3 0 0 0 609,421.8 V428 L604.5,431 L609,434 V440.5 A3,3 0 0 0 612,443.5 H614" fill="none" stroke="#38383d" stroke-width="3.8" stroke-linecap="round" stroke-linejoin="round" /><path d="M622,418.8 H624 A3,3 0 0 1 627,421.8 V428 L631.5,431 L627,434 V440.5 A3,3 0 0 1 624,443.5 H622" fill="none" stroke="#38383d" stroke-width="3.8" stroke-linecap="round" stroke-linejoin="round" /><path d="M800.5,437.5 A14,14 0 1 1 825.5,437.5" fill="none" stroke="#38383d" stroke-width="4" stroke-linecap="round" stroke-linejoin="round" /><line x1="813" y1="439" x2="818.7" y2="428.3" stroke="#38383d" stroke-width="2.2" stroke-linecap="round"/><circle cx="813" cy="439" r="3.6" fill="#38383d"/><rect x="1014.8" y="418.8" width="16.8" height="24.3" rx="4.5" fill="none" stroke="#38383d" stroke-width="3.7"/><path d="M1008,427.5 Q1010,424.5 1013,425.5" fill="none" stroke="#38383d" stroke-width="1.9" stroke-linecap="round" stroke-linejoin="round" /><path d="M1038,427.5 Q1036,424.5 1033,425.5" fill="none" stroke="#38383d" stroke-width="1.9" stroke-linecap="round" stroke-linejoin="round" /><path d="M1008,433.5 Q1010,430.5 1013,431.5" fill="none" stroke="#38383d" stroke-width="1.9" stroke-linecap="round" stroke-linejoin="round" /><path d="M1038,433.5 Q1036,430.5 1033,431.5" fill="none" stroke="#38383d" stroke-width="1.9" stroke-linecap="round" stroke-linejoin="round" /><path d="M1008,439.5 Q1010,436.5 1013,437.5" fill="none" stroke="#38383d" stroke-width="1.9" stroke-linecap="round" stroke-linejoin="round" /><path d="M1038,439.5 Q1036,436.5 1033,437.5" fill="none" stroke="#38383d" stroke-width="1.9" stroke-linecap="round" stroke-linejoin="round" /><line x1="1179" y1="419" x2="1179" y2="443.5" stroke="#38383d" stroke-width="3.5" stroke-linecap="round"/><path d="M1172.5,426.5 L1179,419 L1185.5,426.5" fill="none" stroke="#38383d" stroke-width="3.5" stroke-linecap="round" stroke-linejoin="round" /><line x1="1195" y1="419" x2="1195" y2="443.5" stroke="#38383d" stroke-width="3.5" stroke-linecap="round"/><path d="M1188.5,436 L1195,443.5 L1201.5,436" fill="none" stroke="#38383d" stroke-width="3.5" stroke-linecap="round" stroke-linejoin="round" /><rect x="1342" y="416.9" width="23.9" height="27.9" rx="5" fill="none" stroke="#38383d" stroke-width="4"/><line x1="1343" y1="430.2" x2="1365" y2="430.2" stroke="#38383d" stroke-width="2.1" stroke-linecap="butt"/><line x1="1350" y1="424" x2="1358" y2="424" stroke="#38383d" stroke-width="2.1" stroke-linecap="butt"/><line x1="1350" y1="436" x2="1358" y2="436" stroke="#38383d" stroke-width="2.1" stroke-linecap="butt"/><circle cx="1511" cy="419.6" r="4.1" fill="#12bc00"/><line x1="1498.8" y1="427" x2="1523.2" y2="427" stroke="#12bc00" stroke-width="3.6" stroke-linecap="round"/><rect x="1505" y="427" width="12" height="10.5" fill="#12bc00"/><line x1="1507.3" y1="437" x2="1507.3" y2="444.8" stroke="#12bc00" stroke-width="4.6" stroke-linecap="round"/><line x1="1514.7" y1="437" x2="1514.7" y2="444.8" stroke="#12bc00" stroke-width="4.6" stroke-linecap="round"/><path d="M2136,423.5 V420 A2.5,2.5 0 0 1 2138.5,418 H2153.5 A2.5,2.5 0 0 1 2156,420.5 V443.3 A2.5,2.5 0 0 1 2153.5,445.8 H2144.5" fill="none" stroke="#38383d" stroke-width="4" stroke-linecap="round" stroke-linejoin="round" stroke-linecap="butt"/><rect x="2128" y="424" width="14" height="23.8" rx="3" fill="#38383d"/><rect x="2130.1" y="428" width="9.8" height="15.8" fill="#f9f9fa"/><circle cx="2184" cy="431.8" r="4" fill="#38383d"/><circle cx="2196" cy="431.8" r="4" fill="#38383d"/><circle cx="2208" cy="431.8" r="4" fill="#38383d"/><line x1="2238.5" y1="422.5" x2="2258" y2="441.3" stroke="#38383d" stroke-width="3.2" stroke-linecap="round"/><line x1="2258" y1="422.5" x2="2238.5" y2="441.3" stroke="#38383d" stroke-width="3.2" stroke-linecap="round"/><circle cx="33.5" cy="481.8" r="7" fill="none" stroke="#939395" stroke-width="3"/><line x1="38.8" y1="487.2" x2="46" y2="494.5" stroke="#939395" stroke-width="3.2" stroke-linecap="round"/><line x1="784" y1="475.8" x2="784" y2="496" stroke="#38383d" stroke-width="3.7" stroke-linecap="round"/><line x1="773.8" y1="485.8" x2="794" y2="485.8" stroke="#38383d" stroke-width="3.7" stroke-linecap="round"/><line x1="844.8" y1="480.2" x2="849.5" y2="475.5" stroke="#38383d" stroke-width="5.6" stroke-linecap="round"/><line x1="839" y1="478.5" x2="847.5" y2="487.2" stroke="#38383d" stroke-width="3.6" stroke-linecap="round"/><line x1="842.5" y1="483.5" x2="831.8" y2="494.8" stroke="#38383d" stroke-width="5.6" stroke-linecap="round"/><line x1="842" y1="484" x2="831.8" y2="494.8" stroke="#ffffff" stroke-width="2" stroke-linecap="round"/><path d="M899,475 H917 L911.5,483 V495.5 L904.5,490.5 V483 Z" fill="#d7d7db" stroke="#8c8c90" stroke-width="2" stroke-linejoin="round"/><path d="M900.5,476 H915.5 L911,482 H905 Z" fill="#ffffff" stroke="none"/><line x1="1484" y1="475.6" x2="1484" y2="496.2" stroke="#38383d" stroke-width="3.2" stroke-linecap="round"/><line x1="1473.6" y1="485.9" x2="1494.4" y2="485.9" stroke="#38383d" stroke-width="3.2" stroke-linecap="round"/><path d="M1531,480 A4.5,4.5 0 0 1 1535.5,475.5 H1543.5 L1549,481 V492 A4.5,4.5 0 0 1 1544.5,496.5 H1535.5 A4.5,4.5 0 0 1 1531,492 Z" fill="none" stroke="#38383d" stroke-width="3" stroke-linecap="round" stroke-linejoin="round" /><path d="M1543,475.5 V479 A2,2 0 0 0 1545,481 H1549 Z" fill="#38383d"/><line x1="1536.5" y1="483.2" x2="1539.5" y2="483.2" stroke="#38383d" stroke-width="1.6" stroke-linecap="round"/><line x1="1537" y1="486.8" x2="1543" y2="486.8" stroke="#38383d" stroke-width="1.6" stroke-linecap="round"/><line x1="1536.5" y1="490.3" x2="1543.3" y2="490.3" stroke="#38383d" stroke-width="1.6" stroke-linecap="round"/><rect x="1607.2" y="475.2" width="7.6" height="21.8" fill="#d4d4d7"/><rect x="1589.2" y="475" width="25.6" height="22" rx="1.6" fill="none" stroke="#38383d" stroke-width="2.1"/><line x1="1607.2" y1="475" x2="1607.2" y2="497" stroke="#38383d" stroke-width="2.2" stroke-linecap="butt"/><polygon points="1594.2,482 1602.8,486.6 1594.2,491.2" fill="#38383d"/><rect x="985" y="624" width="14" height="14" rx="2.5" fill="none" stroke="#8f8f8f" stroke-width="3.8"/><line x1="992" y1="618.2" x2="992" y2="622" stroke="#8f8f8f" stroke-width="2.2" stroke-linecap="butt"/><line x1="992" y1="640" x2="992" y2="643.8" stroke="#8f8f8f" stroke-width="2.2" stroke-linecap="butt"/><line x1="979.2" y1="631" x2="983" y2="631" stroke="#8f8f8f" stroke-width="2.2" stroke-linecap="butt"/><line x1="1001" y1="631" x2="1004.8" y2="631" stroke="#8f8f8f" stroke-width="2.2" stroke-linecap="butt"/><rect x="997" y="689.5" width="14" height="14" rx="2.5" fill="none" stroke="#8f8f8f" stroke-width="3.8"/><line x1="1004" y1="683.7" x2="1004" y2="687.5" stroke="#8f8f8f" stroke-width="2.2" stroke-linecap="butt"/><line x1="1004" y1="705.5" x2="1004" y2="709.3" stroke="#8f8f8f" stroke-width="2.2" stroke-linecap="butt"/><line x1="991.2" y1="696.5" x2="995" y2="696.5" stroke="#8f8f8f" stroke-width="2.2" stroke-linecap="butt"/><line x1="1013" y1="696.5" x2="1016.8" y2="696.5" stroke="#8f8f8f" stroke-width="2.2" stroke-linecap="butt"/><rect x="924" y="783.6" width="14" height="14" rx="2.5" fill="none" stroke="#8f8f8f" stroke-width="3.8"/><line x1="931" y1="777.8000000000001" x2="931" y2="781.6" stroke="#8f8f8f" stroke-width="2.2" stroke-linecap="butt"/><line x1="931" y1="799.6" x2="931" y2="803.4" stroke="#8f8f8f" stroke-width="2.2" stroke-linecap="butt"/><line x1="918.2" y1="790.6" x2="922" y2="790.6" stroke="#8f8f8f" stroke-width="2.2" stroke-linecap="butt"/><line x1="940" y1="790.6" x2="943.8" y2="790.6" stroke="#8f8f8f" stroke-width="2.2" stroke-linecap="butt"/><rect x="948" y="955.6" width="14" height="14" rx="2.5" fill="none" stroke="#8f8f8f" stroke-width="3.8"/><line x1="955" y1="949.8000000000001" x2="955" y2="953.6" stroke="#8f8f8f" stroke-width="2.2" stroke-linecap="butt"/><line x1="955" y1="971.6" x2="955" y2="975.4" stroke="#8f8f8f" stroke-width="2.2" stroke-linecap="butt"/><line x1="942.2" y1="962.6" x2="946" y2="962.6" stroke="#8f8f8f" stroke-width="2.2" stroke-linecap="butt"/><line x1="964" y1="962.6" x2="967.8" y2="962.6" stroke="#8f8f8f" stroke-width="2.2" stroke-linecap="butt"/><path d="M1125,811 H1143 L1137.5,819 V831.5 L1130.5,826.5 V819 Z" fill="#d7d7db" stroke="#8c8c90" stroke-width="2" stroke-linejoin="round"/><path d="M1126.5,812 H1141.5 L1137,818 H1131 Z" fill="#ffffff"/><path d="M1088,984 H1106 L1100.5,992 V1004.5 L1093.5,999.5 V992 Z" fill="#d7d7db" stroke="#8c8c90" stroke-width="2" stroke-linejoin="round"/><path d="M1089.5,985 H1104.5 L1100,991 H1094 Z" fill="#ffffff"/><polygon points="852.0,528.3 857.5,522.8 863.0,528.3 863.0,532.0 857.5,526.5 852.0,532.0" fill="#606060"/><polygon points="852.0,1091.5 857.5,1097 863.0,1091.5 863.0,1087.8 857.5,1093.3 852.0,1087.8" fill="#606060"/><polygon points="2251.5,385.0 2257,390.5 2262.5,385.0 2262.5,381.3 2257,386.8 2251.5,381.3" fill="#606060"/><polygon points="2251.5,528.3 2257,522.8 2262.5,528.3 2262.5,532.0 2257,526.5 2251.5,532.0" fill="#606060"/><polygon points="2251.5,1141.0 2257,1146.5 2262.5,1141.0 2262.5,1137.3 2257,1142.8 2251.5,1137.3" fill="#606060"/></svg>
</body></html>
